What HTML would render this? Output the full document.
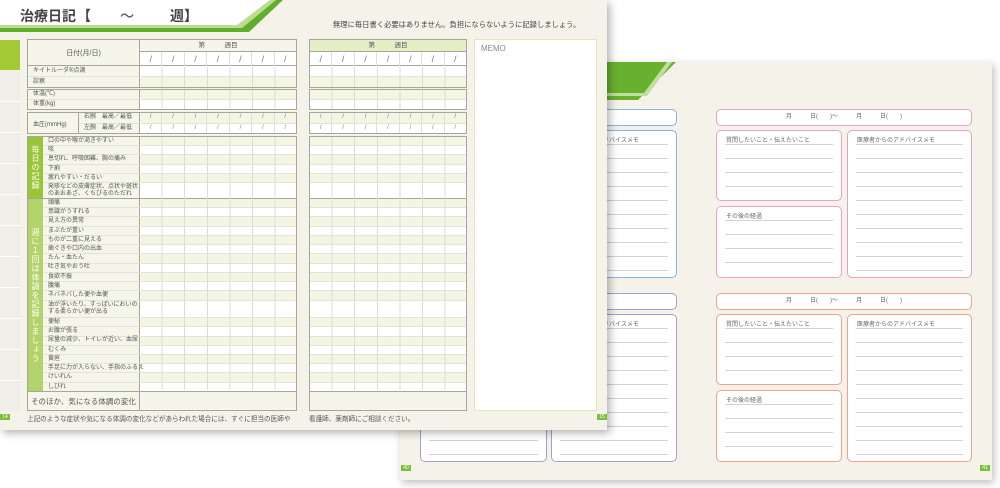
<!DOCTYPE html>
<html><head><meta charset="utf-8"><style>
*{margin:0;padding:0;box-sizing:border-box}
body{width:1000px;height:488px;background:#fff;position:relative;overflow:hidden;font-family:"Liberation Sans","Noto Sans CJK JP",sans-serif;color:#555}
.pg{position:absolute;background:#f5f2ea}
.a{position:absolute}
.tb{position:absolute;border:1.5px solid #a8a59d;background:#fff;overflow:hidden}
.r{display:flex;border-bottom:1px solid #e3e3da;flex:1}
.r:nth-child(odd) .d{background:#f3f6e3}
.r .l{width:112px;flex:none;background:#f5f6e9;border-right:1px solid #a8a59d;font-size:6px;padding-left:5px;display:flex;align-items:center;line-height:1.1;color:#555;white-space:nowrap}
.r .d{flex:1}
.nl .l{display:none}
.vl{position:absolute;left:112px;right:0;background:repeating-linear-gradient(90deg,transparent 0 21.6px,#dcdcd2 21.6px 22.6px)}
.nl .vl{left:0}
.sl{display:flex;height:100%}
.sl span{flex:1;text-align:center;font-size:9px;color:#777;border-right:1px solid #e0e0d8;line-height:14px}
.sec{display:flex;border-bottom:1.5px solid #a8a59d}
.gc{width:15px;flex:none;color:#fff;writing-mode:vertical-rl;font-size:8px;display:flex;align-items:center;justify-content:center;letter-spacing:1px}
.rows{flex:1;display:flex;flex-direction:column}
.rows .l{width:97px}
.bx{position:absolute;background:#fff;border:1.3px solid;border-radius:5px}
.bx .t{position:absolute;left:9px;top:4px;font-size:6px;color:#666;white-space:nowrap}
.bx .ln{position:absolute;left:8px;right:8px;top:0;bottom:5px;background:repeating-linear-gradient(to bottom,transparent 0 13px,#d3d3d3 13px 14px)}
.bar{position:absolute;background:#fff;border:1.3px solid;border-radius:5px;font-size:6px;color:#666;text-align:center;line-height:14px;white-space:pre}
.pn{position:absolute;width:10px;height:6px;background:#7cbf3a;color:#fff;font-size:5px;line-height:6px;text-align:center}
</style></head><body>

<!-- back page -->
<div class="pg" style="left:400px;top:62px;width:592px;height:418px;box-shadow:2px 3px 8px rgba(0,0,0,.25)"></div>
<svg class="a" style="left:0;top:0" width="1000" height="488">
<polygon points="400,62 676,62 638,100 400,100" fill="#67b12f"/>
<polygon points="400,93 644,93 667,62 672,62 647,96 400,96" fill="#c2dea0"/>
</svg>
<div class="bar" style="left:420px;top:109px;width:257px;height:17px;border-color:#86b6e0">月　　　日(　　)～　　　月　　　日(　　)</div>
<div class="bx" style="left:420px;top:130px;width:127px;height:148px;border-color:#86b6e0"><div class="ln"></div></div>
<div class="bx" style="left:551px;top:130px;width:126px;height:148px;border-color:#86b6e0"><div class="t">医療者からのアドバイスメモ</div><div class="ln"></div></div>

<div class="bar" style="left:716px;top:109px;width:256px;height:17px;border-color:#e8a2c8">月　　　日(　　)～　　　月　　　日(　　)</div>
<div class="bx" style="left:716px;top:130px;width:126px;height:71px;border-color:#e8a2c8"><div class="t">質問したいこと・伝えたいこと</div><div class="ln"></div></div>
<div class="bx" style="left:716px;top:206px;width:126px;height:72px;border-color:#e8a2c8"><div class="t">その後の経過</div><div class="ln"></div></div>
<div class="bx" style="left:847px;top:130px;width:125px;height:148px;border-color:#e8a2c8"><div class="t">医療者からのアドバイスメモ</div><div class="ln"></div></div>

<div class="bar" style="left:420px;top:293px;width:257px;height:17px;border-color:#a99dd2">月　　　日(　　)～　　　月　　　日(　　)</div>
<div class="bx" style="left:420px;top:314px;width:127px;height:148px;border-color:#a99dd2"><div class="ln"></div></div>
<div class="bx" style="left:551px;top:314px;width:126px;height:148px;border-color:#a99dd2"><div class="t">医療者からのアドバイスメモ</div><div class="ln"></div></div>

<div class="bar" style="left:716px;top:293px;width:256px;height:17px;border-color:#f0a38a">月　　　日(　　)～　　　月　　　日(　　)</div>
<div class="bx" style="left:716px;top:314px;width:126px;height:71px;border-color:#f0a38a"><div class="t">質問したいこと・伝えたいこと</div><div class="ln"></div></div>
<div class="bx" style="left:716px;top:390px;width:126px;height:72px;border-color:#f0a38a"><div class="t">その後の経過</div><div class="ln"></div></div>
<div class="bx" style="left:847px;top:314px;width:125px;height:148px;border-color:#f0a38a"><div class="t">医療者からのアドバイスメモ</div><div class="ln"></div></div>
<div class="pn" style="left:401px;top:465px">40</div>
<div class="pn" style="left:980px;top:465px">41</div>

<!-- front page -->
<div class="pg" style="left:0;top:0;width:607px;height:430px;box-shadow:3px 3px 8px rgba(0,0,0,.3);z-index:5">
<svg class="a" style="left:0;top:0" width="300" height="40">
<polygon points="0,0 270,0 237,25 0,25" fill="#fff"/>
<polygon points="0,25 237,25 270,0 276,0 242,28 0,28" fill="#bcdc92"/>
<polygon points="0,28 242,28 276,0 283,0 249,32 0,32" fill="#5fae2e"/>
</svg>
<div class="a" style="left:20px;top:6px;font-size:14px;font-weight:bold;color:#444;white-space:nowrap">治療日記</div>
<div class="a" style="left:77px;top:6px;font-size:14px;font-weight:bold;color:#444">【</div>
<div class="a" style="left:120px;top:6px;font-size:14px;color:#444">～</div>
<div class="a" style="left:170px;top:6px;font-size:14px;font-weight:bold;color:#444">週】</div>
<div class="a" style="left:333px;top:20px;font-size:7.3px;color:#444;white-space:nowrap">無理に毎日書く必要はありません。負担にならないように記録しましょう。</div>

<!-- left tabs -->
<div class="a" style="left:0;top:40px;width:20px;height:30px;background:#a3c933"></div>
<div class="a" style="left:0;top:71px;width:20px;height:340px;background:repeating-linear-gradient(to bottom,#efeee9 0 30px,#fff 30px 31px)"></div>

<!-- table 1 left -->
<div class="tb" style="left:27px;top:39px;width:270px;height:49px;display:flex;flex-direction:column">
 <div style="display:flex;height:26px;border-bottom:1.5px solid #a8a59d">
  <div style="width:112px;background:#f5f6e9;border-right:1px solid #a8a59d;font-size:7px;display:flex;align-items:center;justify-content:center">日付(月/日)</div>
  <div style="flex:1;display:flex;flex-direction:column">
   <div style="height:12px;background:#f5f6e9;border-bottom:1px solid #a8a59d;font-size:6.5px;text-align:center;line-height:11px;white-space:pre">第　　　週目</div>
   <div class="sl" style="flex:1"><span>/</span><span>/</span><span>/</span><span>/</span><span>/</span><span>/</span><span style="border:0">/</span></div>
  </div>
 </div>
 <div class="r"><div class="l">キイトルーダ®点滴</div><div class="d"></div></div>
 <div class="r" style="border:0"><div class="l">診察</div><div class="d"></div></div>
 <div class="vl" style="top:27px;bottom:0"></div>
</div>
<!-- table 1 right -->
<div class="tb nl" style="left:309px;top:39px;width:158px;height:49px;display:flex;flex-direction:column">
 <div style="height:26px;border-bottom:1.5px solid #a8a59d;display:flex;flex-direction:column">
   <div style="height:12px;background:#e5efc6;border-bottom:1px solid #a8a59d;font-size:6.5px;text-align:center;line-height:11px;white-space:pre">第　　　週目</div>
   <div class="sl" style="flex:1"><span>/</span><span>/</span><span>/</span><span>/</span><span>/</span><span>/</span><span style="border:0">/</span></div>
 </div>
 <div class="r"><div class="d"></div></div>
 <div class="r" style="border:0"><div class="d"></div></div>
 <div class="vl" style="top:27px;bottom:0"></div>
</div>

<!-- table 2 -->
<div class="tb" style="left:27px;top:89px;width:270px;height:21px;display:flex;flex-direction:column">
 <div class="r"><div class="l">体温(℃)</div><div class="d"></div></div>
 <div class="r" style="border:0"><div class="l">体重(kg)</div><div class="d"></div></div>
 <div class="vl" style="top:0;bottom:0"></div>
</div>
<div class="tb nl" style="left:309px;top:89px;width:158px;height:21px;display:flex;flex-direction:column">
 <div class="r"><div class="d"></div></div><div class="r" style="border:0"><div class="d"></div></div>
 <div class="vl" style="top:0;bottom:0"></div>
</div>

<!-- table 3 -->
<div class="tb" style="left:27px;top:112px;width:270px;height:22px;display:flex">
 <div style="width:51px;background:#f5f6e9;border-right:1px solid #a8a59d;font-size:6px;display:flex;align-items:center;padding-left:5px">血圧(mmHg)</div>
 <div style="flex:1;display:flex;flex-direction:column">
  <div class="r"><div class="l" style="width:61px;white-space:pre">右腕　最高／最低</div><div class="d"><div class="sl" style="font-size:6px"><span style="font-size:6px;line-height:9px">/</span><span style="font-size:6px;line-height:9px">/</span><span style="font-size:6px;line-height:9px">/</span><span style="font-size:6px;line-height:9px">/</span><span style="font-size:6px;line-height:9px">/</span><span style="font-size:6px;line-height:9px">/</span><span style="font-size:6px;line-height:9px;border:0">/</span></div></div></div>
  <div class="r" style="border:0"><div class="l" style="width:61px;white-space:pre">左腕　最高／最低</div><div class="d"><div class="sl"><span style="font-size:6px;line-height:9px">/</span><span style="font-size:6px;line-height:9px">/</span><span style="font-size:6px;line-height:9px">/</span><span style="font-size:6px;line-height:9px">/</span><span style="font-size:6px;line-height:9px">/</span><span style="font-size:6px;line-height:9px">/</span><span style="font-size:6px;line-height:9px;border:0">/</span></div></div></div>
 </div>
</div>
<div class="tb nl" style="left:309px;top:112px;width:158px;height:22px;display:flex;flex-direction:column">
  <div class="r"><div class="d"><div class="sl"><span style="font-size:6px;line-height:9px">/</span><span style="font-size:6px;line-height:9px">/</span><span style="font-size:6px;line-height:9px">/</span><span style="font-size:6px;line-height:9px">/</span><span style="font-size:6px;line-height:9px">/</span><span style="font-size:6px;line-height:9px">/</span><span style="font-size:6px;line-height:9px;border:0">/</span></div></div></div>
  <div class="r" style="border:0"><div class="d"><div class="sl"><span style="font-size:6px;line-height:9px">/</span><span style="font-size:6px;line-height:9px">/</span><span style="font-size:6px;line-height:9px">/</span><span style="font-size:6px;line-height:9px">/</span><span style="font-size:6px;line-height:9px">/</span><span style="font-size:6px;line-height:9px">/</span><span style="font-size:6px;line-height:9px;border:0">/</span></div></div></div>
</div>

<!-- table 4 left -->
<div class="tb" style="left:27px;top:136px;width:270px;height:275px;display:flex;flex-direction:column">
 <div class="sec" style="height:62px">
  <div class="gc" style="background:#9cc43a">毎日の記録</div>
  <div class="rows">
   <div class="r"><div class="l">口の中や喉が渇きやすい</div><div class="d"></div></div>
   <div class="r"><div class="l">咳</div><div class="d"></div></div>
   <div class="r"><div class="l">息切れ、呼吸困難、胸の痛み</div><div class="d"></div></div>
   <div class="r"><div class="l">下痢</div><div class="d"></div></div>
   <div class="r"><div class="l">疲れやすい・だるい</div><div class="d"></div></div>
   <div class="r" style="flex:1.8;border:0"><div class="l">発疹などの皮膚症状、点状や斑状<br>のあおあざ、くちびるのただれ</div><div class="d"></div></div>
  </div>
 </div>
 <div class="sec" style="height:193px">
  <div class="gc" style="background:#b3d36a">週に１回は体調を記録しましょう</div>
  <div class="rows">
   <div class="r"><div class="l">頭痛</div><div class="d"></div></div>
   <div class="r"><div class="l">意識がうすれる</div><div class="d"></div></div>
   <div class="r"><div class="l">見え方の異常</div><div class="d"></div></div>
   <div class="r"><div class="l">まぶたが重い</div><div class="d"></div></div>
   <div class="r"><div class="l">ものが二重に見える</div><div class="d"></div></div>
   <div class="r"><div class="l">歯ぐきや口内の出血</div><div class="d"></div></div>
   <div class="r"><div class="l">たん・血たん</div><div class="d"></div></div>
   <div class="r"><div class="l">吐き気やおう吐</div><div class="d"></div></div>
   <div class="r"><div class="l">食欲不振</div><div class="d"></div></div>
   <div class="r"><div class="l">腹痛</div><div class="d"></div></div>
   <div class="r"><div class="l">ネバネバした便や血便</div><div class="d"></div></div>
   <div class="r" style="flex:2"><div class="l">油が浮いたり、すっぱいにおいの<br>する柔らかい便が出る</div><div class="d"></div></div>
   <div class="r"><div class="l">便秘</div><div class="d"></div></div>
   <div class="r"><div class="l">お腹が張る</div><div class="d"></div></div>
   <div class="r"><div class="l">尿量の減少、トイレが近い、血尿</div><div class="d"></div></div>
   <div class="r"><div class="l">むくみ</div><div class="d"></div></div>
   <div class="r"><div class="l">黄疸</div><div class="d"></div></div>
   <div class="r"><div class="l">手足に力が入らない、手指のふるえ</div><div class="d"></div></div>
   <div class="r"><div class="l">けいれん</div><div class="d"></div></div>
   <div class="r" style="border:0"><div class="l">しびれ</div><div class="d"></div></div>
  </div>
 </div>
 <div style="flex:1;display:flex;background:#f5f6e9">
  <div style="width:112px;border-right:1px solid #a8a59d;font-size:7.5px;display:flex;align-items:center;justify-content:center;white-space:nowrap">そのほか、気になる体調の変化</div>
 </div>
 <div class="vl" style="top:0;height:253px"></div>
</div>
<!-- table 4 right -->
<div class="tb nl" style="left:309px;top:136px;width:158px;height:275px;display:flex;flex-direction:column">
 <div class="sec" style="height:62px"><div class="rows">
  <div class="r"><div class="d"></div></div><div class="r"><div class="d"></div></div><div class="r"><div class="d"></div></div><div class="r"><div class="d"></div></div><div class="r"><div class="d"></div></div><div class="r" style="flex:1.8;border:0"><div class="d"></div></div>
 </div></div>
 <div class="sec" style="height:193px"><div class="rows">
  <div class="r"><div class="d"></div></div><div class="r"><div class="d"></div></div><div class="r"><div class="d"></div></div><div class="r"><div class="d"></div></div><div class="r"><div class="d"></div></div><div class="r"><div class="d"></div></div><div class="r"><div class="d"></div></div><div class="r"><div class="d"></div></div><div class="r"><div class="d"></div></div><div class="r"><div class="d"></div></div><div class="r"><div class="d"></div></div><div class="r" style="flex:2"><div class="d"></div></div><div class="r"><div class="d"></div></div><div class="r"><div class="d"></div></div><div class="r"><div class="d"></div></div><div class="r"><div class="d"></div></div><div class="r"><div class="d"></div></div><div class="r"><div class="d"></div></div><div class="r"><div class="d"></div></div><div class="r" style="border:0"><div class="d"></div></div>
 </div></div>
 <div style="flex:1;background:#f5f6e9"></div>
 <div class="vl" style="top:0;height:253px"></div>
</div>

<!-- memo -->
<div class="a" style="left:474px;top:39px;width:123px;height:372px;background:#fff;border:1.5px solid #dfe8b6"><div style="position:absolute;left:6px;top:4px;font-size:8px;color:#888">MEMO</div></div>

<div class="a" style="left:27px;top:413px;font-size:6.6px;color:#555;white-space:nowrap">上記のような症状や気になる体調の変化などがあらわれた場合には、すぐに担当の医師や</div>
<div class="a" style="left:309px;top:413px;font-size:6.6px;color:#555;white-space:nowrap">看護師、薬剤師にご相談ください。</div>
<div class="pn" style="left:0;top:414px">14</div>
<div class="pn" style="left:597px;top:414px">15</div>
</div>
</body></html>
